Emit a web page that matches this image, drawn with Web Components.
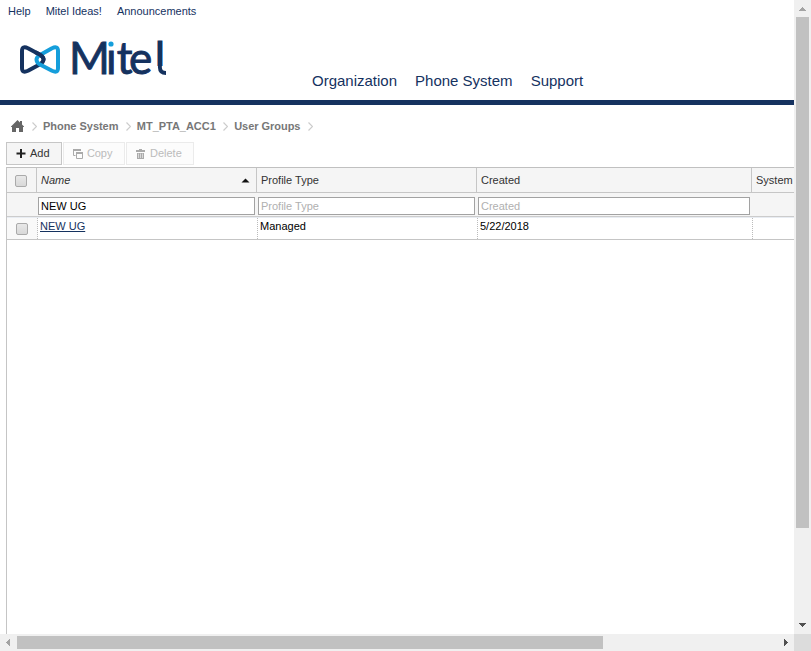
<!DOCTYPE html>
<html lang="en"><head><meta charset="utf-8"><title>User Groups</title>
<style>html,body{margin:0;height:100%;overflow:hidden;background:#fff}body{font:11px/13px "Liberation Sans",Arial,sans-serif;color:#222}</style></head>
<body><mitel-app></mitel-app>
<script>
const define=(name,html,init)=>customElements.define(name,class extends HTMLElement{
  constructor(){super();this.attachShadow({mode:'open'}).innerHTML=html;}
  connectedCallback(){if(init)init(this,this.shadowRoot);}
});

define('mitel-logo',`<style>:host{display:block;width:170px;height:60px}svg{display:block}text{font-family:Lato,sans-serif}</style>
<svg width="170" height="60" viewBox="0 25 170 60">
<g fill="none" stroke-width="4" stroke-linejoin="round" stroke-linecap="butt">
<path stroke="#15325f" d="M40 64.300L28 70.800Q22 73.500 22 68V51Q22 45.500 28 48.200L40.500 55Q46.500 59.500 40.500 64"/>
<path stroke="#159edb" d="M40 55L52 48.200Q58 45.500 58 51V68Q58 73.500 52 70.800L39.500 64.300Q33.500 59.500 39.500 55.200L41 54.400"/>
<path stroke="#15325f" d="M35.500 52.300L40.500 55Q44 57.500 43.500 60"/>
</g>
<text x="69 106 116.700 128.900 154.700" y="74" font-size="44" fill="#15325f" stroke="#15325f" stroke-width=".9">Mitel</text>
<rect x="156.500" y="66" width="10" height="9" fill="#fff"/>
<path d="M159.900 41V67.500Q160 73 166 73" fill="none" stroke="#15325f" stroke-width="3.900"/>
<rect x="107" y="39.500" width="8" height="8" fill="#fff"/><circle cx="111" cy="44" r="2.600" fill="#159edb"/>
</svg>`);

define('site-header',`<style>
:host{display:flex;flex-direction:column;height:100px;border-bottom:5px solid #15325f;color:#15325f;flex:none}
.top{display:flex;gap:15px;padding:5px 8px 0;height:25px;box-sizing:border-box}
nav{display:flex;gap:18px;padding:47px 0 0 142px;font-size:15px;line-height:18px;height:18px}
.main{display:flex;height:75px;align-items:flex-start}
</style><div class="top"><span>Help</span><span>Mitel Ideas!</span><span>Announcements</span></div>
<div class="main"><mitel-logo></mitel-logo><nav><span>Organization</span><span>Phone System</span><span>Support</span></nav></div>`);

define('bread-crumbs',`<style>:host{display:flex;align-items:center;height:37px;padding:6px 0 0 11px;box-sizing:border-box;color:#777;font-weight:bold;flex:none}
svg{display:block;flex:none}.c{margin:0 6px 0 7.4px}span{white-space:nowrap;letter-spacing:-.03px}</style>
<svg width="13" height="13" viewBox="0 0 13 13" fill="#666"><path d="M6.500 0L9 2.500V1H11V4.500L13 6.500V7H12V12H8V8H5V12H1V7H0V6.500Z"/></svg>
<svg class="c" style="margin-left:8px" width="5" height="9"><path d="M.5.5L4.500 4.500L.5 8.500" fill="none" stroke="#ccc" stroke-width="1.200"/></svg><span>Phone System</span>
<svg class="c" width="5" height="9"><path d="M.5.5L4.500 4.500L.5 8.500" fill="none" stroke="#ccc" stroke-width="1.200"/></svg><span>MT_PTA_ACC1</span>
<svg class="c" width="5" height="9"><path d="M.5.5L4.500 4.500L.5 8.500" fill="none" stroke="#ccc" stroke-width="1.200"/></svg><span>User Groups</span>
<svg class="c" width="5" height="9"><path d="M.5.5L4.500 4.500L.5 8.500" fill="none" stroke="#ccc" stroke-width="1.200"/></svg>`);

define('tool-button',`<style>:host{display:flex;align-items:center;box-sizing:border-box;height:23px;border:1px solid #c6c6c6;background:#f5f5f5;padding-left:9px;gap:4px;color:#333}
:host([off]){border-color:#ebebeb;background:#fcfcfc;color:#bbb}::slotted(svg){display:block;flex:none}</style><slot></slot>`);

define('check-box',`<style>:host{display:block;box-sizing:border-box;width:12px;height:12px;border:1px solid #aaa;border-radius:2px;background:linear-gradient(#e8e8e8,#d8d8d8)}</style>`);

define('filter-box',`<style>:host{display:block;box-sizing:border-box;height:18px;border:1px solid #a2a2a2;background:#fff;padding:2px 2px 0;color:#b0b0b0;line-height:13px}:host([filled]){color:#000}</style><slot></slot>`);

define('data-grid',`<style>
:host{display:flex;flex-direction:column;flex:1;margin:2px 0 0 6px;border-left:1px solid #c5c5c5;border-top:1px solid #c0c0c0;overflow:hidden}
.r{display:grid;box-sizing:border-box;grid-template-columns:30px 220px 220px 275px 200px;flex:none}
.r>*{box-sizing:border-box}
.h{height:25px;background:#f5f5f5;border-bottom:1px solid #c6c6c6;color:#333}
.h>div{border-right:1px solid #c6c6c6;padding:6px 10px 0 4px;display:flex;justify-content:space-between}
.h i{font-style:italic}.h svg{margin-top:4px;margin-right:-4px}
.h .k{padding:7px 0 0 8px;justify-content:flex-start}
.f{height:24px;background:#f5f5f5;border-bottom:1px solid #ccc;padding-top:4px}
.f filter-box{margin:0 2px 0 1px}
.d{height:23px;border-top:1px solid #e8ecf2;border-bottom:1px solid #c5c5c5;grid-template-columns:31px 220px 220px 275px 200px;color:#000}
.d>div{border-right:1px dotted #bbb;padding:2px 0 0 2px}.d .k{background:#f9f9f9;padding:5px 0 0 9px}
a{color:#15325f;text-decoration:underline}
</style>
<div class="r h"><div class="k"><check-box></check-box></div><div><i>Name</i><svg width="9" height="5"><path d="M.5 4.500L4.500 .5L8.500 4.500Z" fill="#111"/></svg></div><div>Profile Type</div><div>Created</div><div>System</div></div>
<div class="r f"><span></span><filter-box filled>NEW UG</filter-box><filter-box>Profile Type</filter-box><filter-box>Created</filter-box><span></span></div>
<div class="r d"><div class="k"><check-box></check-box></div><div><a>NEW UG</a></div><div>Managed</div><div>5/22/2018</div><div></div></div>`);

define('scroll-bar',`<style>:host{display:flex;background:#f0f0f0;width:17px;flex-direction:column;justify-content:space-between}
:host([horizontal]){width:auto;height:17px;flex-direction:row}svg{display:block;flex:none}
.t{background:#c1c1c1;width:13px;height:511px;margin:0 auto auto 2px}
:host([horizontal]) .t{width:586px;height:13px;margin:2px auto 0 0}.e{transform:rotate(180deg)}
</style><svg width="17" height="17" shape-rendering="crispEdges"><path fill="#a3a3a3"/></svg><div class="t"></div><svg class="e" width="17" height="17" shape-rendering="crispEdges"><path fill="#505050"/></svg>`,(host,root)=>{
const d=host.hasAttribute('horizontal')?'M6 8h1v-1h1v-1h1v-1h1v7h-1v-1h-1v-1h-1v-1h-1z':'M8 7h1v1h1v1h1v1h1v1h-7v-1h1v-1h1v-1h1z';
root.querySelectorAll('path').forEach(p=>p.setAttribute('d',d));});

define('mitel-app',`<style>
:host{display:grid;width:811px;height:651px;grid-template:634px 17px / 794px 17px}
main{display:flex;flex-direction:column;overflow:hidden;min-width:0}
.tools{display:flex;gap:1px;padding-left:6px;flex:none}.corner{background:#dcdcdc}
</style><main><site-header></site-header><bread-crumbs></bread-crumbs>
<div class="tools"><tool-button style="width:56px"><svg width="10" height="9" viewBox="0 0 10 9"><path d="M5 0V9M0.500 4.500H9.500" stroke="#222" stroke-width="2"/></svg><span>Add</span></tool-button>
<tool-button off style="width:62px;gap:3px"><svg width="11" height="10" viewBox="0 0 11 10"><path d="M2.500 6.500H.5V.5H7.500V2" fill="none" stroke="#aaa"/><path d="M3.500 3.500H9.500V9.500H3.500Z" fill="none" stroke="#aaa"/><path d="M3 3h7v2H3zM0 0h8v2H0z" fill="#aaa"/></svg><span style="letter-spacing:-.1px">Copy</span></tool-button>
<tool-button off style="width:68px"><svg width="10" height="10" viewBox="0 0 10 10"><path d="M0 1H3V0H6V1H9V3H0Z M1 4H8V10H1Z" fill="#aaa"/><path d="M2.500 4.500V9M4.500 4.500V9M6.500 4.500V9" stroke="#eee" stroke-width=".7"/></svg><span>Delete</span></tool-button></div>
<data-grid></data-grid></main><scroll-bar></scroll-bar><scroll-bar horizontal></scroll-bar><div class="corner"></div>`);
</script></body></html>
